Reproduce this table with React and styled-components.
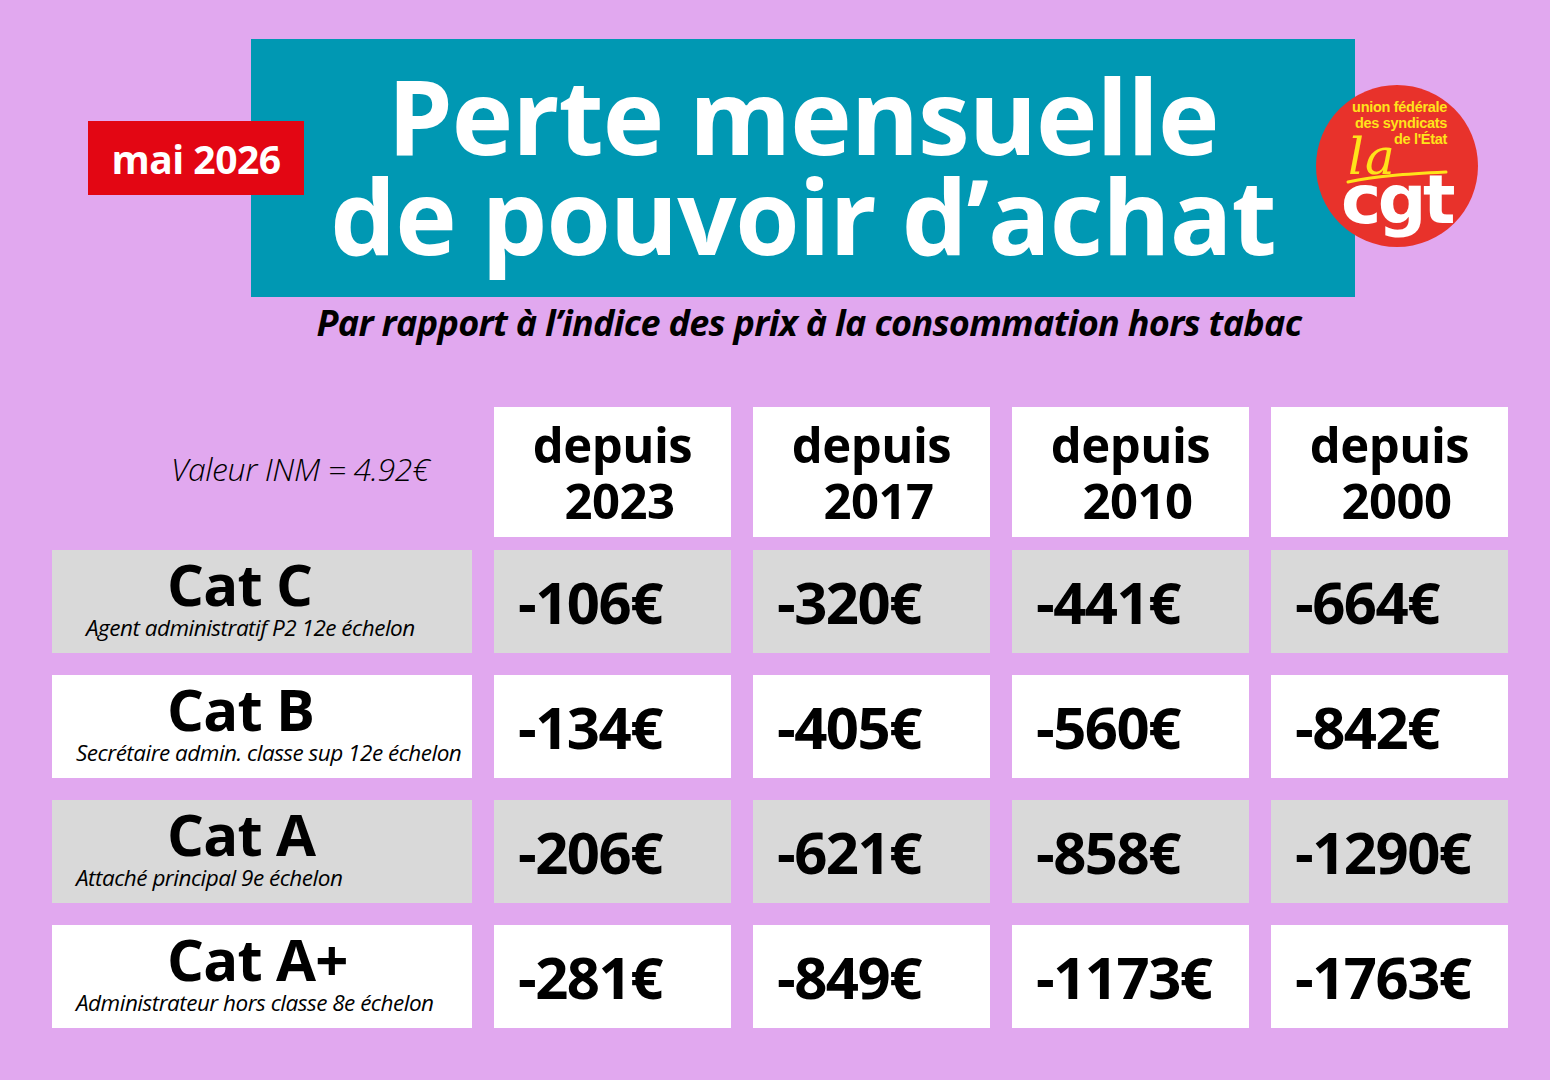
import React from "react";
import styled, { createGlobalStyle } from "styled-components";

const GlobalStyle = createGlobalStyle`
  body {
    margin: 0;
    background: #e1a8ef;
    font-family: "Open Sans", "DejaVu Sans", sans-serif;
  }
`;

const years = ["2023", "2017", "2010", "2000"];

const rows = [
  { cat: "Cat C", grade: "Agent administratif P2 12e échelon", shift: 10, grey: true, values: ["-106€", "-320€", "-441€", "-664€"] },
  { cat: "Cat B", grade: "Secrétaire admin. classe sup 12e échelon", grey: false, values: ["-134€", "-405€", "-560€", "-842€"] },
  { cat: "Cat A", grade: "Attaché principal 9e échelon", grey: true, values: ["-206€", "-621€", "-858€", "-1290€"] },
  { cat: "Cat A+", grade: "Administrateur hors classe 8e échelon", grey: false, values: ["-281€", "-849€", "-1173€", "-1763€"] },
];

const Page = styled.div`
  width: 1550px;
  height: 1080px;
  background: #e1a8ef;
  color: #000;
  overflow: hidden;
`;

const Header = styled.header`
  position: relative;
  padding: 39px 0 0 251px;
`;

const TitleBox = styled.div`
  width: 1104px;
  height: 258px;
  box-sizing: border-box;
  padding-top: 26px;
  background: #0098b3;
  color: #fff;
  text-align: center;
`;

const Title = styled.h1`
  margin: 0;
  font-size: 104px;
  line-height: 100px;
  font-weight: 700;
  letter-spacing: -1px;
`;

const DateBadge = styled.div`
  position: absolute;
  left: 88px;
  top: 121px;
  width: 216px;
  height: 74px;
  background: #e30613;
  color: #fff;
  font-size: 39px;
  font-weight: 700;
  display: flex;
  align-items: center;
  justify-content: center;
  letter-spacing: -0.5px;
`;

const Logo = styled.div`
  position: absolute;
  left: 1316px;
  top: 85px;
  width: 162px;
  height: 162px;
  border-radius: 50%;
  background: #e8322b;
  display: flex;
  flex-direction: column;
  align-items: flex-end;
  padding: 14px 31px 0 0;
  box-sizing: border-box;
  font-family: "Liberation Sans", Arial, sans-serif;
`;

const LogoLine = styled.span`
  color: #ffe31a;
  font-size: 14.5px;
  font-weight: 700;
  line-height: 16px;
  letter-spacing: -0.3px;
`;

const Script = styled.div`
  position: relative;
  align-self: flex-start;
  margin-left: 30px;
  height: 34px;
  width: 102px;
`;

const ScriptText = styled.span`
  position: absolute;
  left: 2px;
  top: -16px;
  color: #ffe31a;
  font-family: "DejaVu Serif", serif;
  font-style: italic;
  font-size: 50px;
  line-height: 52px;
  letter-spacing: 1px;
`;

const Swoosh = styled.svg`
  position: absolute;
  left: 0;
  top: 22px;
`;

const Cgt = styled.span`
  margin-top: -12px;
  margin-right: -5px;
  color: #fff;
  font-family: "DejaVu Sans", sans-serif;
  font-weight: 700;
  font-size: 68px;
  line-height: 62px;
  letter-spacing: -3.5px;
`;

const Subtitle = styled.p`
  width: 1104px;
  box-sizing: border-box;
  margin: 6px 0 0 251px;
  padding-left: 12px;
  text-align: center;
  font-size: 36px;
  line-height: 40px;
  font-weight: 700;
  font-style: italic;
  letter-spacing: -0.7px;
`;

const Table = styled.section`
  margin-top: 64px;
  padding-left: 52px;
`;

const Grid = styled.div`
  display: grid;
  grid-template-columns: 420px repeat(4, 237px);
  column-gap: 22px;
  row-gap: 22px;
  grid-auto-rows: ${(p) => p.$rowHeight}px;
  margin-bottom: ${(p) => p.$after || 0}px;
`;

const InmNote = styled.div`
  display: flex;
  align-items: center;
  padding: 0 0 8px 119px;
  font-size: 32px;
  font-weight: 300;
  font-style: italic;
  letter-spacing: -0.4px;
`;

const YearCell = styled.div`
  background: #fff;
  display: flex;
  flex-direction: column;
  align-items: center;
  justify-content: center;
  font-size: 49px;
  font-weight: 700;
  line-height: 56px;
  letter-spacing: -0.5px;
`;

const Year = styled.span`
  padding-left: 14px;
`;

const LabelCell = styled.div`
  background: ${(p) => (p.$grey ? "#d9d9d9" : "#fff")};
  display: flex;
  flex-direction: column;
  padding-top: 5px;
  box-sizing: border-box;
`;

const Cat = styled.span`
  padding-left: 115px;
  font-size: 58px;
  font-weight: 700;
  line-height: 58px;
  letter-spacing: -0.8px;
`;

const Grade = styled.span`
  margin-top: 2px;
  padding-left: ${(p) => 24 + (p.$shift || 0)}px;
  font-size: 22.5px;
  line-height: 25px;
  font-weight: 400;
  font-style: italic;
  letter-spacing: -0.5px;
  white-space: nowrap;
`;

const ValueCell = styled.div`
  background: ${(p) => (p.$grey ? "#d9d9d9" : "#fff")};
  display: flex;
  align-items: center;
  padding-left: 24px;
  font-size: 58px;
  font-weight: 700;
  letter-spacing: -1.5px;
`;

export default function App() {
  return (
    <Page>
      <GlobalStyle />
      <Header>
        <TitleBox>
          <Title>
            Perte mensuelle
            <br />
            de pouvoir d’achat
          </Title>
        </TitleBox>
        <DateBadge>mai 2026</DateBadge>
        <Logo>
          <LogoLine>union fédérale</LogoLine>
          <LogoLine>des syndicats</LogoLine>
          <LogoLine>de l'État</LogoLine>
          <Script>
            <ScriptText>la</ScriptText>
            <Swoosh width="102" height="16" viewBox="0 0 102 16">
              <path d="M2 13 C 30 7, 60 5, 100 3" stroke="#ffe31a" strokeWidth="3" fill="none" strokeLinecap="round" />
            </Swoosh>
          </Script>
          <Cgt>cgt</Cgt>
        </Logo>
      </Header>
      <Subtitle>Par rapport à l’indice des prix à la consommation hors tabac</Subtitle>
      <Table>
        <Grid $rowHeight={130} $after={13}>
          <InmNote>Valeur INM = 4.92€</InmNote>
          {years.map((y) => (
            <YearCell key={y}>
              <span>depuis</span>
              <Year>{y}</Year>
            </YearCell>
          ))}
        </Grid>
        <Grid $rowHeight={103}>
          {rows.map((r) => (
            <React.Fragment key={r.cat}>
              <LabelCell $grey={r.grey}>
                <Cat>{r.cat}</Cat>
                <Grade $shift={r.shift}>{r.grade}</Grade>
              </LabelCell>
              {r.values.map((v, i) => (
                <ValueCell key={i} $grey={r.grey}>
                  {v}
                </ValueCell>
              ))}
            </React.Fragment>
          ))}
        </Grid>
      </Table>
    </Page>
  );
}
